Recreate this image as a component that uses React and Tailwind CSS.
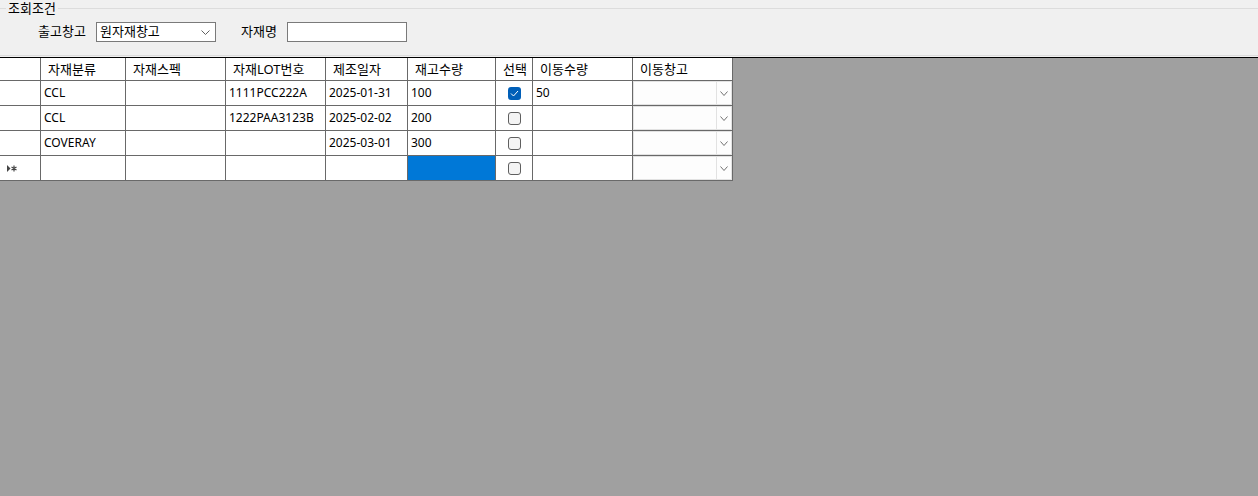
import React from 'react'

const font = { fontFamily: '"Segoe UI", "Noto Sans", "Noto Sans CJK KR", sans-serif' }

const columns = ['자재분류', '자재스펙', '자재LOT번호', '제조일자', '재고수량', '선택', '이동수량', '이동창고']

const rows = [
  { kind: 'CCL', spec: '', lot: '1111PCC222A', date: '2025-01-31', qty: '100', checked: true, move: '50' },
  { kind: 'CCL', spec: '', lot: '1222PAA3123B', date: '2025-02-02', qty: '200', checked: false, move: '' },
  { kind: 'COVERAY', spec: '', lot: '', date: '2025-03-01', qty: '300', checked: false, move: '' }
]

const Chevron = ({ w = 9, color = '#606060' }) => (
  <svg width={w} height="5" viewBox={`0 0 ${w} 5`} fill="none">
    <path d={`M0.5 0.5 L${w / 2} 4.5 L${w - 0.5} 0.5`} stroke={color} strokeWidth="1" />
  </svg>
)

const CheckBox = ({ checked }) =>
  checked ? (
    <div className="w-[13px] h-[13px] rounded-[3px] bg-[#005fb8] flex items-center justify-center">
      <svg width="9" height="7" viewBox="0 0 9 7" fill="none">
        <path d="M1 3.5 L3.5 6 L8 1" stroke="#ffffff" strokeWidth="1" />
      </svg>
    </div>
  ) : (
    <div className="w-[13px] h-[13px] rounded-[3px] border border-[#5f5f5f] bg-[#f4f4f4]" />
  )

const CellCombo = () => (
  <div className="h-full w-full flex border border-[#e2e2e2] bg-[#fdfdfd]">
    <div className="flex-1" />
    <div className="w-[15px] border-l border-[#e2e2e2] flex items-center justify-center">
      <Chevron w={8} color="#707070" />
    </div>
  </div>
)

const cell = 'border-r border-b border-[#696969] bg-white flex items-center text-[12px] leading-none text-black'

const App = () => {
  return (
    <div className="w-[1258px] h-[496px] flex flex-col bg-[#a0a0a0] overflow-hidden" style={font}>
      {/* 조회조건 */}
      <div className="h-[57px] bg-[#f0f0f0]">
        <fieldset className="m-0 p-0 h-[56px] border-0 border-y border-[#dcdcdc]">
          <legend className="ml-[6px] px-[2px] text-[13px] leading-[16px] text-black">조회조건</legend>
          <div className="flex items-center mt-[6px] pl-[38px] text-[13px] text-black">
            <span className="w-[48px]">출고창고</span>
            <div className="ml-[10px] w-[120px] h-[20px] border border-[#7a7a7a] bg-white flex items-center pl-[3px] pr-[5px]">
              <span className="flex-1">원자재창고</span>
              <Chevron />
            </div>
            <span className="ml-[25px] w-[36px]">자재명</span>
            <div className="ml-[10px] w-[120px] h-[20px] border border-[#7a7a7a] bg-white" />
          </div>
        </fieldset>
      </div>

      {/* Grid */}
      <div className="flex-1 border-t border-black">
        <div className="grid grid-cols-[41px_85px_100px_100px_82px_88px_37px_100px_100px] w-[733px]">
          <div className={`${cell} h-[23px]`} />
          {columns.map((c) => (
            <div key={c} className={`${cell} h-[23px] pl-[7px] text-[13px]`}>{c}</div>
          ))}

          {rows.map((r, i) => (
            <React.Fragment key={i}>
              <div className={`${cell} h-[25px]`} />
              <div className={`${cell} h-[25px] pl-[3px]`}>{r.kind}</div>
              <div className={`${cell} h-[25px] pl-[3px]`}>{r.spec}</div>
              <div className={`${cell} h-[25px] pl-[3px]`}>{r.lot}</div>
              <div className={`${cell} h-[25px] pl-[3px]`}>{r.date}</div>
              <div className={`${cell} h-[25px] pl-[3px]`}>{r.qty}</div>
              <div className={`${cell} h-[25px] justify-center`}><CheckBox checked={r.checked} /></div>
              <div className={`${cell} h-[25px] pl-[3px]`}>{r.move}</div>
              <div className={`${cell} h-[25px]`}><CellCombo /></div>
            </React.Fragment>
          ))}

          {/* new row */}
          <div className={`${cell} h-[25px] pl-[7px]`}>
            <svg width="11" height="7" viewBox="0 0 11 7" fill="#444444">
              <path d="M0 0 L3.5 3.5 L0 7 Z" />
              <path d="M7 0.5 V6.5 M4.5 2 L9.5 5 M4.5 5 L9.5 2" stroke="#444444" strokeWidth="1.2" />
            </svg>
          </div>
          <div className={`${cell} h-[25px]`} />
          <div className={`${cell} h-[25px]`} />
          <div className={`${cell} h-[25px]`} />
          <div className={`${cell} h-[25px]`} />
          <div className={`${cell} h-[25px] !bg-[#0078d7]`} />
          <div className={`${cell} h-[25px] justify-center`}><CheckBox checked={false} /></div>
          <div className={`${cell} h-[25px]`} />
          <div className={`${cell} h-[25px]`}><CellCombo /></div>
        </div>
      </div>
    </div>
  )
}

export default App
